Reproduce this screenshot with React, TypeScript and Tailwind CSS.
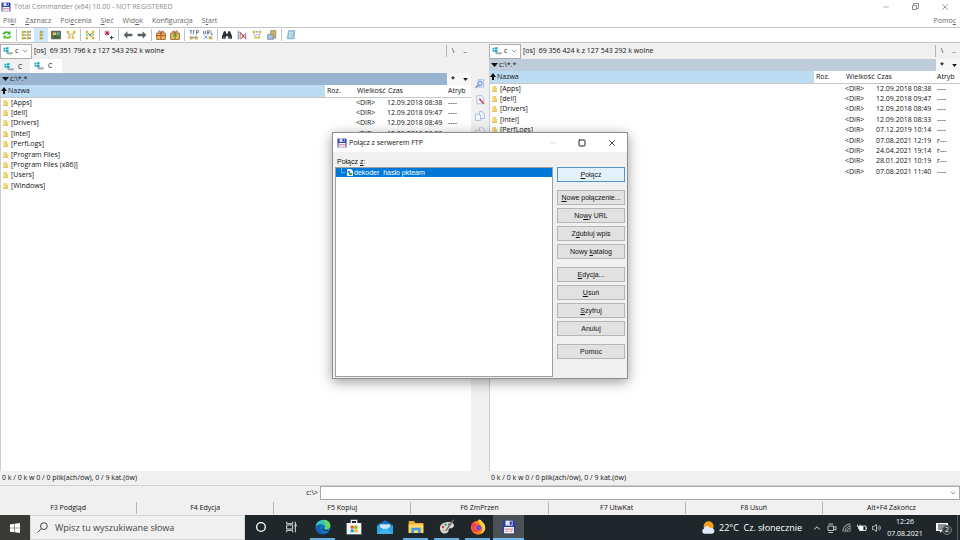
import { useState } from "react";
import type { ReactNode } from "react";
import { ChevronDown, ChevronUp, Minus, Square, X } from "lucide-react";

type Entry = { name: string; date: string; attr: string };

const entries: Entry[] = [
  { name: "[Apps]", date: "12.09.2018 08:38", attr: "----" },
  { name: "[dell]", date: "12.09.2018 09:47", attr: "----" },
  { name: "[Drivers]", date: "12.09.2018 08:49", attr: "----" },
  { name: "[Intel]", date: "12.09.2018 08:33", attr: "----" },
  { name: "[PerfLogs]", date: "07.12.2019 10:14", attr: "----" },
  { name: "[Program Files]", date: "07.08.2021 12:19", attr: "r---" },
  { name: "[Program Files (x86)]", date: "24.04.2021 19:14", attr: "r---" },
  { name: "[Users]", date: "28.01.2021 10:19", attr: "r---" },
  { name: "[Windows]", date: "07.08.2021 11:40", attr: "----" },
];

// [before, underlined letter, after]
type Label = [string, string, string];

const menu: Label[] = [
  ["Pli", "k", "i"],
  ["", "Z", "aznacz"],
  ["Pol", "e", "cenia"],
  ["", "S", "ieć"],
  ["Wid", "o", "k"],
  ["Konfi", "g", "uracja"],
  ["S", "t", "art"],
];

const functionKeys = [
  "F3 Podgląd",
  "F4 Edycja",
  "F5 Kopiuj",
  "F6 ZmPrzen",
  "F7 UtwKat",
  "F8 Usuń",
  "Alt+F4 Zakończ",
];

const ftpButtons: Label[][] = [
  [["", "P", "ołącz"]],
  [
    ["", "N", "owe połączenie..."],
    ["No", "w", "y URL"],
    ["Z", "d", "ubluj wpis"],
    ["Nowy ", "k", "atalog"],
  ],
  [
    ["", "E", "dycja..."],
    ["", "U", "suń"],
    ["", "S", "zyfruj"],
    ["Anuluj", "", ""],
  ],
  [["Pomoc", "", ""]],
];

function Mnemonic({ label }: { label: Label }) {
  return (
    <>
      {label[0]}
      <span className="underline">{label[1]}</span>
      {label[2]}
    </>
  );
}

function Floppy({ className }: { className: string }) {
  return (
    <svg viewBox="0 0 20 20" className={className} aria-hidden="true">
      <path d="M1 1h16l2 2v16H1z" fill="#2b3fae" />
      <path d="M5 1h10v7H5z" fill="#e4e8f8" />
      <path d="M11 2h3v5h-3z" fill="#2b3fae" />
      <path d="M3 10h14v9H3z" fill="#fafafa" />
      <path d="M4 13h12M5 16h4M11 16h4" stroke="#c66" strokeWidth="1.3" />
    </svg>
  );
}

function DriveIcon() {
  return (
    <svg viewBox="0 0 20 16" className="h-2 w-2.5 shrink-0" aria-hidden="true">
      <path d="M6 11l12-1 2 2-3 3-9-1z" fill="#8d969d" />
      <path d="M7 11l11-1-2 3-8-1z" fill="#cfd6da" />
      <path d="M1 2l4-1v4H1zM6 1l5-1v5H6zM1 6h4v4l-4-1zM6 6h5v5l-5-1z" fill="#19a7c9" />
    </svg>
  );
}

function FolderIcon() {
  return (
    <svg viewBox="0 0 6 8" className="h-2 w-1.5 shrink-0" aria-hidden="true">
      <path d="M0 1h4v2h1v4H0z" fill="#f0d06c" />
      <path d="M0 1h2v5H0z" fill="#f8e08e" />
      <path d="M0 6h5v1H0z" fill="#e6c25e" />
    </svg>
  );
}

function Glyph({ children }: { children: ReactNode }) {
  return (
    <svg viewBox="0 0 16 16" className="size-2.5" fill="none" aria-hidden="true">
      {children}
    </svg>
  );
}

const packageShape = (
  <>
    <path d="M1 5h14v10H1z" fill="#f0c060" stroke="#8a5215" strokeWidth="1.3" />
    <path d="M5 5c-3-5 3-4 3 0 0-4 6-5 3 0" stroke="#a33c1c" strokeWidth="1.6" />
  </>
);

type Tool = { name: string; icon: ReactNode; active?: boolean };

const toolGroups: Tool[][] = [
  [
    {
      name: "Odśwież",
      icon: (
        <>
          <path d="M1 7c1-5 6-6 10-4l2-2 1 6H8l2-2C7 4 5 5 4 7z" fill="#39b52e" />
          <path d="M15 9c-1 5-6 6-10 4l-2 2-1-6h6l-2 2c3 1 5 0 6-2z" fill="#5cc83c" />
        </>
      ),
    },
  ],
  [
    {
      name: "Krótki",
      icon: (
        <>
          <path d="M1 1h4v4H1zM1 6h4v4H1zM1 11h4v4H1zM9 1h4v4H9zM9 6h4v4H9zM9 11h4v4H9z" fill="#cdb647" />
          <path d="M5 3h3M5 8h3M5 13h3M13 3h3M13 8h3M13 13h3" stroke="#68717f" strokeWidth="1.8" />
        </>
      ),
    },
    {
      name: "Pełny",
      active: true,
      icon: (
        <>
          <path d="M6 1h4v4H6zM6 6h4v4H6zM6 11h4v4H6z" fill="#c9a92c" />
          <path d="M10 3h2M10 8h2M10 13h2" stroke="#7c8798" strokeWidth="1.5" />
        </>
      ),
    },
    {
      name: "Miniatury",
      icon: (
        <>
          <path d="M1 2h14v12H1z" fill="#5f7f4e" stroke="#46513e" strokeWidth="1.5" />
          <path d="M3 4h5v4H3z" fill="#e8c64a" />
          <path d="M3 12l4-4 3 3 2-2 2 3z" fill="#275f37" />
          <path d="M9 4h5v3H9z" fill="#67a9d8" />
        </>
      ),
    },
    {
      name: "Drzewo",
      icon: (
        <>
          <path d="M1 1h4v4H1zM11 1h4v4h-4zM3 10h4v4H3zM9 10h4v4H9z" fill="#e1bc3b" />
          <path d="M3 5l3 4M13 5l-3 4M7 7h2" stroke="#a28424" strokeWidth="1.5" />
        </>
      ),
    },
  ],
  [
    {
      name: "Zamień",
      icon: (
        <>
          <path d="M1 1h4v4H1zM1 11h4v4H1zM11 1h4v4h-4zM11 11h4v4h-4z" fill="#d5b944" />
          <path d="M5 5l6 6M11 5l-4 4M3 6v4M13 6v4" stroke="#7c9a52" strokeWidth="1.8" />
        </>
      ),
    },
  ],
  [
    {
      name: "Odwróć zaznaczenie",
      icon: (
        <>
          <path d="M5 1v8M1 5h8M2 2l6 6M8 2L2 8" stroke="#b81742" strokeWidth="1.6" />
          <path d="M12 9v6M9 12h6" stroke="#3c4252" strokeWidth="1.8" />
        </>
      ),
    },
  ],
  [
    { name: "Wstecz", icon: <path d="M1 8l6-6v4h8v4H7v4z" fill="#565f69" /> },
    { name: "Dalej", icon: <path d="M15 8L9 2v4H1v4h8v4z" fill="#565f69" /> },
  ],
  [
    {
      name: "Spakuj",
      icon: (
        <>
          {packageShape}
          <path d="M8 5v10M1 9h14" stroke="#b0452c" strokeWidth="1.6" />
        </>
      ),
    },
    {
      name: "Rozpakuj",
      icon: (
        <>
          {packageShape}
          <path d="M8 7v7M5 10l3-3 3 3" stroke="#5c9a32" strokeWidth="2" />
        </>
      ),
    },
  ],
  [
    {
      name: "FTP połącz",
      icon: (
        <>
          <path d="M1 1h4M3 1v6M7 1h3M7 1v6M12 1v6M12 1h3v3h-3" stroke="#66718a" strokeWidth="1.4" />
          <path d="M1 10h5v5H1zM9 10h5v5H9z" fill="#c1b06d" />
          <path d="M6 12h3" stroke="#5c6d91" strokeWidth="1.5" />
        </>
      ),
    },
    {
      name: "FTP nowe",
      icon: (
        <>
          <path d="M1 1v5h3V1M7 7V1h3v3H7l3 3M13 1v6h3" stroke="#66718a" strokeWidth="1.4" />
          <path d="M2 9l5 5M7 9l-5 5" stroke="#518cc2" strokeWidth="1.5" />
          <path d="M9 10h6v5H9z" fill="#c1b06d" />
        </>
      ),
    },
  ],
  [
    {
      name: "Szukaj",
      icon: (
        <>
          <path d="M3 2h3l1 4h2l1-4h3l3 8v4h-6v-4H6v4H0v-4z" fill="#2c3035" />
          <path d="M2 11h2v2H2zM12 11h2v2h-2z" fill="#8995a0" />
        </>
      ),
    },
    {
      name: "Wielokrotna zmiana nazwy",
      icon: (
        <>
          <path d="M2 1v14M5 6v9M14 4v11" stroke="#7486a9" strokeWidth="1.6" />
          <path d="M4 3l10 11M12 7l-5 7" stroke="#cb3d42" strokeWidth="1.7" />
        </>
      ),
    },
    {
      name: "Synchronizuj katalogi",
      icon: (
        <>
          <path d="M1 1h4v4H1zM11 1h4v4h-4zM4 10h4v4H4zM9 10h4v4H9z" fill="#d6bd55" />
          <path d="M3 6l2 3M13 6l-2 3M6 3h4M7 7h2" stroke="#73849a" strokeWidth="1.6" />
        </>
      ),
    },
    {
      name: "Kopiuj nazwy",
      icon: (
        <>
          <path d="M6 1h8v12H6z" fill="#d8b553" stroke="#81714b" />
          <path d="M1 7h9v8H1z" fill="#a5bedb" stroke="#5e7da5" />
        </>
      ),
    },
  ],
  [
    {
      name: "Notatnik",
      icon: (
        <>
          <path d="M4 1h10l-1 13H2z" fill="#9ecbe0" stroke="#6c9db4" />
          <path d="M5 4h6M5 7h6M4 10h6" stroke="#e9f6fb" />
        </>
      ),
    },
  ],
];

const sideTools: Tool[] = [
  {
    name: "Podgląd",
    icon: (
      <>
        <path d="M5 1h9v12H5z" fill="#dce8fb" stroke="#92a8d6" />
        <circle cx="8" cy="7" r="3.5" fill="#c1d8f6" stroke="#6583c4" strokeWidth="1.3" />
        <path d="M5 10l-4 4" stroke="#6583c4" strokeWidth="2" />
      </>
    ),
  },
  {
    name: "Edycja",
    icon: (
      <>
        <path d="M3 1h8l3 3v10H3z" fill="#f2f5fd" stroke="#92a8d6" />
        <path d="M7 6l7 8" stroke="#cc3f48" strokeWidth="2.4" />
      </>
    ),
  },
  {
    name: "Kopiuj",
    icon: (
      <>
        <path d="M7 1h5l3 3v8H7z" fill="#eef4ff" stroke="#7f9cd8" />
        <path d="M1 5h5l3 3v7H1z" fill="#f8fbff" stroke="#7f9cd8" />
      </>
    ),
  },
  {
    name: "Przenieś",
    icon: (
      <>
        <path d="M7 1h5l3 3v8H7z" fill="#eef0fc" stroke="#a7a5d8" />
        <path d="M1 5h5l3 3v7H1z" fill="#fbf4fb" stroke="#c3a7d0" />
      </>
    ),
  },
];

function Toolbar() {
  return (
    <div className="flex h-4 shrink-0 items-center border-t border-b border-[#c4c4c4] bg-white">
      {toolGroups.map((group, i) => (
        <div key={i} className="flex items-center">
          {i > 0 && <span className="mx-0.5 h-3 w-px bg-[#b9c3cc]" />}
          <div className={group.length > 2 ? "flex gap-px" : "flex"}>
            {group.map((tool) => (
              <button
                key={tool.name}
                aria-label={tool.name}
                className={
                  tool.active
                    ? "flex h-3.5 w-3.5 items-center justify-center bg-[#cce8ff]"
                    : "flex h-3.5 w-3.5 items-center justify-center"
                }
              >
                <Glyph>{tool.icon}</Glyph>
              </button>
            ))}
          </div>
        </div>
      ))}
    </div>
  );
}

type PanelProps = { id: string; free: string; tabs?: boolean; active?: boolean };

function Panel({ id, free, tabs, active }: PanelProps) {
  return (
    <section className="flex min-w-0 flex-1 flex-col">
      <div className="flex h-4 shrink-0 items-center">
        <div className="relative flex h-[15px] w-8 items-center border border-[#adadad] bg-white pl-0.5">
          <DriveIcon />
          <select
            aria-label="Dysk"
            defaultValue="c"
            className="w-full appearance-none bg-transparent pl-0.5 leading-3 outline-none"
          >
            <option>c</option>
          </select>
          <ChevronDown className="pointer-events-none absolute right-0.5 size-2 text-[#666]" strokeWidth={2} />
        </div>
        <span className="flex-1 pl-0.5 whitespace-pre">{free}</span>
        <div className="flex h-3 w-[25px] border-l border-[#b4b4b4]">
          <button aria-label="Katalog główny" className="w-3 leading-3">\</button>
          <button aria-label="Katalog nadrzędny" className="w-3 leading-3">..</button>
        </div>
      </div>

      {tabs && (
        <div className="flex h-3.5 shrink-0 items-end" role="tablist">
          <button role="tab" aria-selected={false} className="flex h-3 w-[30px] items-center gap-1 pl-1">
            <DriveIcon />C
          </button>
          <button role="tab" aria-selected={true} className="flex h-3.5 w-8 items-center gap-1 bg-white pl-1">
            <DriveIcon />C
          </button>
        </div>
      )}

      <div className="flex h-3 shrink-0">
        <div
          className={
            active
              ? "flex flex-1 items-center bg-[#99b4d1] pl-0.5 leading-3"
              : "flex flex-1 items-center bg-[#bfcddb] pl-0.5 leading-3"
          }
        >
          <svg viewBox="0 0 7 4" className="h-1 w-[7px]" aria-hidden="true">
            <path d="M0 0h7L3.5 4z" fill="#111" />
          </svg>
          <span className="pl-px">c:\*.*</span>
        </div>
        <button aria-label="Ulubione katalogi" className="w-3 bg-[#f7f7f7] leading-3 font-bold">*</button>
        <button aria-label="Historia katalogów" className="flex w-3 items-center justify-center bg-[#f7f7f7]">
          <svg viewBox="0 0 6 4" className="h-[3px] w-[5px]" aria-hidden="true">
            <path d="M0 0h6L3 4z" fill="#111" />
          </svg>
        </button>
      </div>

      <div className="min-h-0 flex-1 overflow-hidden border-l border-[#c9ced3] bg-white">
        <table className="h-[106px] w-full table-fixed text-left leading-[10px] whitespace-nowrap" id={id}>
          <colgroup>
            <col />
            <col className="w-[31px]" />
            <col className="w-[30px]" />
            <col className="w-[60px]" />
            <col className="w-[25px]" />
          </colgroup>
          <thead>
            <tr className="h-3 border-b border-[#c8c8c8]">
              <th className="bg-[#bcdcf4] p-0 font-normal">
                <span className="flex items-center">
                  <svg viewBox="0 0 6 7" className="h-[7px] w-1.5" aria-hidden="true">
                    <path d="M3 0l3 4H4v3H2V4H0z" fill="#111" />
                  </svg>
                  <span className="pl-px">Nazwa</span>
                </span>
              </th>
              <th className="p-0 pl-0.5 font-normal">Roz.</th>
              <th className="p-0 pl-px font-normal">Wielkość</th>
              <th className="p-0 pl-0.5 font-normal">Czas</th>
              <th className="p-0 pl-0.5 font-normal">Atryb</th>
            </tr>
          </thead>
          <tbody>
            {entries.map((e) => (
              <tr key={e.name}>
                <td className="p-0">
                  <span className="flex items-center gap-0.5 pl-0.5">
                    <FolderIcon />
                    {e.name}
                  </span>
                </td>
                <td className="p-0" />
                <td className="p-0">&lt;DIR&gt;</td>
                <td className="p-0 pl-px">{e.date}</td>
                <td className="p-0 pl-0.5">{e.attr}</td>
              </tr>
            ))}
          </tbody>
        </table>
      </div>
      <p className="h-3 shrink-0 pl-0.5 leading-[14px]">0 k / 0 k w 0 / 0 plik(ach/ów), 0 / 9 kat.(ów)</p>
    </section>
  );
}

function FtpDialog() {
  return (
    <div className="pointer-events-none absolute inset-x-0 top-[132px] flex justify-center">
      <div
        role="dialog"
        aria-labelledby="ftp-title"
        className="pointer-events-auto w-[296px] border border-[#8f8f8f] bg-[#f0f0f0] shadow-[0_3px_12px_rgba(0,0,0,0.4)]"
      >
        <header className="flex h-[19px] items-center bg-white pl-1">
          <Floppy className="size-2.5" />
          <h2 id="ftp-title" className="flex-1 pl-0.5">Połącz z serwerem FTP</h2>
          <button aria-label="Minimalizuj" className="flex w-7 justify-center text-[#c8c8c8]">
            <Minus className="size-2" strokeWidth={2} />
          </button>
          <button aria-label="Maksymalizuj" className="flex w-[30px] justify-center text-[#222]">
            <Square className="size-2" strokeWidth={3} />
          </button>
          <button aria-label="Zamknij" className="flex w-[30px] justify-center text-[#222]">
            <X className="size-2.5" strokeWidth={2} />
          </button>
        </header>
        <div className="px-0.5 pb-px font-['Liberation_Sans',Arial,sans-serif]">
          <p className="pt-1 pl-0.5 leading-[11px]" id="ftp-list-label">
            Połącz <span className="underline">z</span>:
          </p>
          <div className="flex gap-1">
            <ul
              role="listbox"
              aria-labelledby="ftp-list-label"
              className="h-[210px] flex-1 border border-[#a0a0a0] bg-white"
            >
              <li
                role="option"
                aria-selected={true}
                className="flex h-[9px] items-center bg-[#0078d7] pl-1 leading-[9px] whitespace-pre text-white"
              >
                <svg viewBox="0 0 14 9" className="h-[9px] w-3.5" aria-hidden="true">
                  <path d="M1.5 0v4.500h4" fill="none" stroke="#8fc4ee" strokeWidth="0.7" />
                  <path d="M7 1h4l2 2v5H7z" fill="#e6f0f8" />
                  <path d="M8 3h2v2H8z" fill="#3d74b8" />
                  <path d="M9 5h3v2H9z" fill="#4a9a54" />
                </svg>
                dekoder  hasło pkteam
              </li>
            </ul>
            <div className="flex w-[68px] flex-col gap-2">
              {ftpButtons.map((group, i) => (
                <div key={i} className="flex flex-col gap-[3px]">
                  {group.map((label) => (
                    <button
                      key={label.join("")}
                      className={
                        i === 0
                          ? "h-[15px] border border-[#4f93c8] bg-[#e3f1fb] leading-3 text-[#111]"
                          : "h-[15px] border border-[#b5b5b5] bg-[#e1e1e1] leading-3 text-[#111]"
                      }
                    >
                      <Mnemonic label={label} />
                    </button>
                  ))}
                </div>
              ))}
            </div>
          </div>
        </div>
      </div>
    </div>
  );
}

type App = { name: string; icon: ReactNode; running?: boolean };

const taskbarApps: App[] = [
  {
    name: "Cortana",
    icon: <circle cx="12" cy="12" r="6.500" fill="none" stroke="#fff" strokeWidth="2" />,
  },
  {
    name: "Widok zadań",
    icon: (
      <g fill="none" stroke="#ddd" strokeWidth="1.500">
        <path d="M4 4v3h9V4M4 20v-3h9v3M4 9h9v6H4zM17 4v16" />
        <path d="M16 8h3v3h-3z" fill="#ddd" stroke="none" />
      </g>
    ),
  },
  {
    name: "Microsoft Edge",
    running: true,
    icon: (
      <>
        <circle cx="12" cy="12" r="11" fill="#1376c8" />
        <path d="M1 12C1 0 22-3 23 10c0 5-5 7-9 5 3-2 1-7-4-7-5 0-8 2-9 4z" fill="#37c6b6" />
        <path d="M12 1c7 0 12 5 11 10-1 4-6 5-9 4 4-4 1-9-2-14z" fill="#67d85e" />
        <path d="M10 9c-5 4-1 12 6 13C7 26-1 18 1 12c2-3 6-4 9-3z" fill="#1161b0" />
        <path d="M11 11c-1 4 4 7 10 5-4 4-12 2-10-5z" fill="#20272b" />
      </>
    ),
  },
  {
    name: "Microsoft Store",
    icon: (
      <>
        <path d="M8 7V2h8v5" fill="none" stroke="#eee" strokeWidth="2" />
        <path d="M1 6h22v17H1z" fill="#f7f7f7" />
        <path d="M7 10h4.500v4.500H7z" fill="#f25022" />
        <path d="M12.500 10H17v4.500h-4.500z" fill="#7fba00" />
        <path d="M7 15.500h4.500V20H7z" fill="#00a4ef" />
        <path d="M12.500 15.500H17V20h-4.500z" fill="#ffb900" />
      </>
    ),
  },
  {
    name: "Poczta",
    icon: (
      <>
        <path d="M0 9l12-7 12 7v13H0z" fill="#1670c4" />
        <path d="M4 8h16v7H4z" fill="#cfe8f8" />
        <path d="M0 9l12 8 12-8v13H0z" fill="#28a4e8" />
        <path d="M0 22l12-8 12 8z" fill="#48b6ee" />
      </>
    ),
  },
  {
    name: "Eksplorator plików",
    running: true,
    icon: (
      <>
        <path d="M1 3h8l2 3h12v15H1z" fill="#e9ae32" />
        <path d="M1 8h22v13H1z" fill="#fbd766" />
        <path d="M5 13h14v8h-4v-4H9v4H5z" fill="#3f9ade" />
      </>
    ),
  },
  {
    name: "Paint",
    running: true,
    icon: (
      <>
        <path d="M3 19C-3 9 8 3 18 5c8 3 4 9-1 9-4 0-1 5-5 7-3 1-7 1-9-2z" fill="#cfdbe0" />
        <circle cx="6" cy="12" r="2" fill="#cc4e3b" />
        <circle cx="10" cy="8.500" r="1.800" fill="#4a9e4d" />
        <circle cx="15" cy="8" r="1.700" fill="#3975be" />
        <circle cx="7" cy="17" r="1.700" fill="#e0b13a" />
        <path d="M22 1L10 18" stroke="#8c6a45" strokeWidth="2" />
      </>
    ),
  },
  {
    name: "Firefox",
    running: true,
    icon: (
      <>
        <circle cx="12" cy="13" r="10.500" fill="#ff7a27" />
        <path d="M12 2c3-3 5 0 7 3 7 6 4 17-5 18 6-4 6-10 2-13-1-4-4-5-4-8z" fill="#ffd43b" />
        <path d="M2 8l3-4 2 3 4 1-3 3c-3 4 2 7 6 6-3 4-9 3-10-1z" fill="#f73b50" />
        <circle cx="13" cy="13" r="4" fill="#7548c8" />
      </>
    ),
  },
];

function Taskbar() {
  return (
    <footer className="flex h-[25px] shrink-0 bg-[#20272b] text-[9px] text-white">
      <button aria-label="Start" className="flex w-[30px] items-center justify-center bg-[#393a35]">
        <svg viewBox="0 0 10 10" className="size-2.5" aria-hidden="true">
          <path d="M0 1.400l4.500-.6v4H0zM5 .7L10 0v4.800H5zM0 5.300h4.500v4L0 8.700zM5 5.300h5V10l-5-.7z" fill="#fff" />
        </svg>
      </button>
      <label className="flex w-[215px] items-center border border-[#d5d5d5] bg-[#f0f0f0] pl-1.5 text-[#444]">
        <svg viewBox="0 0 12 12" className="size-[11px]" fill="none" stroke="#333" aria-hidden="true">
          <circle cx="7.500" cy="4.500" r="3.700" />
          <path d="M5 7L.7 11.400" />
        </svg>
        <input
          aria-label="Wyszukaj"
          placeholder="Wpisz tu wyszukiwane słowa"
          className="min-w-0 flex-1 bg-transparent pl-[7px] outline-none placeholder:text-[#444]"
        />
      </label>
      <nav className="flex">
        {taskbarApps.map((app) => (
          <button key={app.name} aria-label={app.name} className="flex w-[31px] flex-col items-center">
            <span className="flex flex-1 items-center">
              <svg viewBox="0 0 24 24" className="size-4" aria-hidden="true">
                {app.icon}
              </svg>
            </span>
            <span className={app.running ? "h-0.5 w-[25px] bg-[#6aaee0]" : "h-0.5"} />
          </button>
        ))}
        <button aria-label="Total Commander" className="flex w-[31px] flex-col items-center bg-[#4b5257]">
          <span className="flex flex-1 items-center">
            <Floppy className="size-3.5" />
          </span>
          <span className="h-0.5 w-full bg-[#76b9ed]" />
        </button>
      </nav>
      <div className="ml-auto flex items-center">
        <button className="flex items-center gap-1 pr-2.5">
          <svg viewBox="0 0 24 24" className="size-3.5" aria-hidden="true">
            <circle cx="13" cy="9" r="8.500" fill="#f9a11f" />
            <path d="M5 22a5 5 0 010-9c1-5 8-6 10-1 8-2 11 8 4 10z" fill="#dceaf7" />
          </svg>
          <span className="whitespace-pre">22°C  Cz. słonecznie</span>
        </button>
        <div className="flex items-center gap-[5px]">
          <ChevronUp className="size-2.5" strokeWidth={2} />
          <svg viewBox="0 0 20 20" className="size-2.5" fill="none" stroke="#e6e6e6" strokeWidth="1.600" aria-label="Meet Now">
            <path d="M2 6h11v9H2zM13 9l5-2v7l-5-2M3 2h9M3 19h9" />
          </svg>
          <svg viewBox="0 0 20 20" className="size-2.5" fill="none" stroke="#ddd" strokeWidth="1.600" aria-label="Wi-Fi">
            <path d="M2 17C2 8 8 2 17 2M6 18C6 11 11 6 18 6M10 18c0-5 3-8 8-8M14 18c0-2 2-4 4-4" />
          </svg>
          <svg viewBox="0 0 20 20" className="size-2.5" fill="none" stroke="#fff" strokeWidth="1.600" aria-label="Bateria">
            <path d="M5 6h13v9H5zM19 9v3" />
            <path d="M6 7h6v7H6z" fill="#fff" />
            <path d="M1 3v4h5V3M3 7v5" />
          </svg>
          <svg viewBox="0 0 20 20" className="size-2.5" fill="none" stroke="#ddd" strokeWidth="1.500" aria-label="Głośność">
            <path d="M1 7h3l5-4v14l-5-4H1zM12 7c1 2 1 4 0 6M15 5c2 3 2 7 0 10" />
          </svg>
        </div>
        <div className="w-11 pl-0.5 text-center text-[7px] leading-3">
          <div>12:26</div>
          <div>07.08.2021</div>
        </div>
        <button aria-label="Powiadomienia" className="relative flex w-[31px] items-center justify-center">
          <svg viewBox="0 0 12 12" className="size-3" aria-hidden="true">
            <path d="M0 1h12v8H6l-2 2V9H0z" fill="#fff" />
            <path d="M2 3h8M2 5h8M2 7h5" stroke="#20272b" />
          </svg>
          <span className="absolute top-[3px] left-4 size-2.5 rounded-full border border-[#777] bg-[#353b3f] text-[7px] leading-2">
            2
          </span>
        </button>
        <span className="mr-0.5 h-[25px] w-px bg-[#555c60]" />
      </div>
    </footer>
  );
}

export default function App() {
  const [command, setCommand] = useState("");

  return (
    <main className="relative flex h-screen flex-col overflow-hidden bg-[#f0f0f0] font-['Open_Sans','Noto_Sans',sans-serif] text-[7px] leading-3 text-[#111]">
      <header className="flex h-3.5 shrink-0 items-center bg-white pl-px text-[#8c8c8c]">
        <Floppy className="size-2.5" />
        <h1 className="flex-1 pl-[3px]">Total Commander (x64) 10.00 - NOT REGISTERED</h1>
        <button aria-label="Minimalizuj" className="flex w-[29px] justify-center">
          <Minus className="size-2" strokeWidth={2} />
        </button>
        <button aria-label="Przywróć" className="flex w-[29px] justify-center">
          <svg viewBox="0 0 8 8" className="size-2" fill="none" stroke="currentColor" aria-hidden="true">
            <path d="M1.500 2.500h4v4h-4zM2.500 2V.500h5v5H6" />
          </svg>
        </button>
        <button aria-label="Zamknij" className="flex w-[31px] justify-center">
          <X className="size-2.5" strokeWidth={2} />
        </button>
      </header>
      <nav className="flex h-[13px] shrink-0 gap-[9px] bg-white pr-1 pl-[3px] text-[#666]">
        {menu.map((label) => (
          <button key={label.join("")}>
            <Mnemonic label={label} />
          </button>
        ))}
        <button className="ml-auto">
          <Mnemonic label={["Pomo", "c", ""]} />
        </button>
      </nav>
      <Toolbar />

      <div className="flex min-h-0 flex-1">
        <Panel id="left-files" free="[os]  69 351 796 k z 127 543 292 k wolne" tabs active />
        <div className="flex w-[18px] shrink-0 flex-col items-center gap-1.5 pt-9">
          {sideTools.map((tool) => (
            <button key={tool.name} aria-label={tool.name}>
              <Glyph>{tool.icon}</Glyph>
            </button>
          ))}
        </div>
        <Panel id="right-files" free="[os]  69 356 424 k z 127 543 292 k wolne" />
      </div>

      <div className="mt-0.5 flex h-[15px] shrink-0 items-center border-t border-[#d0d0d0]">
        <label htmlFor="command" className="w-1/3 pr-0.5 text-right">c:\&gt;</label>
        <div className="flex h-3.5 flex-1 items-center border border-[#a9a9a9] bg-white">
          <input
            id="command"
            value={command}
            onChange={(e) => setCommand(e.target.value)}
            className="min-w-0 flex-1 px-0.5 outline-none"
          />
          <button aria-label="Historia poleceń" className="pr-0.5 text-[#666]">
            <ChevronDown className="size-2" strokeWidth={2} />
          </button>
        </div>
      </div>
      <div className="grid h-[15px] shrink-0 grid-cols-7 items-center divide-x divide-[#b4b4b4]">
        {functionKeys.map((key) => (
          <button key={key} className="h-3 leading-3">
            {key}
          </button>
        ))}
      </div>
      <Taskbar />

      <FtpDialog />
    </main>
  );
}
